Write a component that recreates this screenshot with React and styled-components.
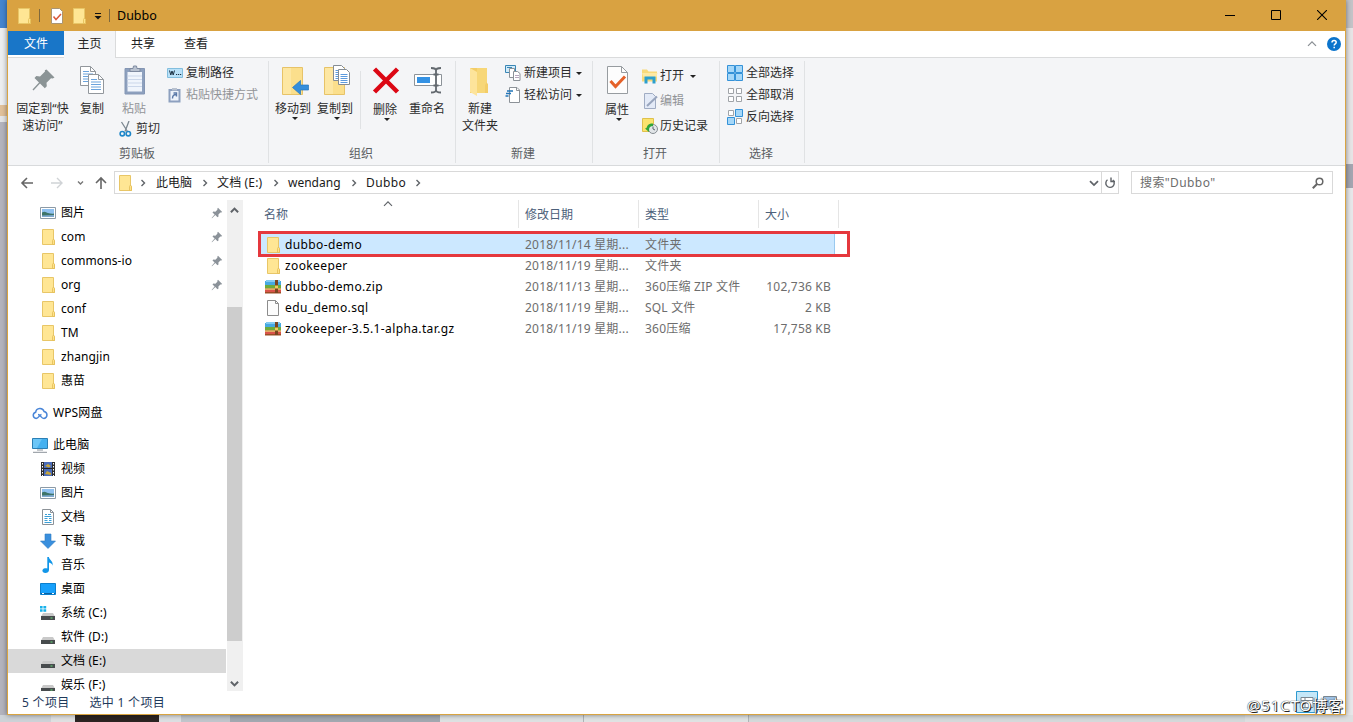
import React from 'react';
import styled, { createGlobalStyle, css } from 'styled-components';

const Global = createGlobalStyle`
  * { box-sizing: border-box; }
  body { margin: 0; overflow: hidden; }
`;

const Desktop = styled.div`
  display: grid;
  grid-template-columns: 7px 1339px 7px;
  grid-template-rows: 715px 7px;
  width: 1353px;
  height: 722px;
  overflow: hidden;
  background: #dfe2e4;
  font: 12px/16px 'Noto Sans', 'Noto Sans CJK SC', sans-serif;
  color: #1a1a1a;
  white-space: nowrap;
`;
const Edge = styled.div`
  display: flex;
  flex-direction: column;
`;
const Taskbar = styled.div`
  grid-column: 1 / -1;
  display: flex;
`;
const Block = styled.i`
  display: block;
  flex: ${p => (p.$size ? `0 0 ${p.$size}px` : '1')};
  background: ${p => p.$color};
`;

const Window = styled.main`
  position: relative;
  display: flex;
  flex-direction: column;
  border: 1px solid #d9a441;
  border-top: 0;
  background: #fff;
  box-shadow: 0 0 5px rgba(0, 0, 0, 0.45);
`;

const TitleBar = styled.header`
  display: flex;
  align-items: center;
  flex: 0 0 31px;
  padding-left: 8px;
  background: #d9a241;
  color: #000;
`;
const TitleDivider = styled.i`
  width: 1px;
  height: 13px;
  background: #7f683c;
  margin: 0 ${p => p.$after}px 0 ${p => p.$before}px;
`;
const Title = styled.h1`
  margin: 0;
  font: inherit;
  font-size: 12.5px;
  flex: 1;
`;
const Caption = styled.button`
  display: grid;
  place-items: center;
  width: 46px;
  height: 31px;
  padding: 0 0 1px;
  border: 0;
  background: none;
`;

const TabBar = styled.nav`
  display: flex;
  align-items: flex-start;
  flex: 0 0 27px;
  height: 27px;
  min-height: 0;
  border-bottom: 1px solid #dadbdc;
`;
const Tab = styled.a`
  display: flex;
  justify-content: center;
  align-items: center;
  width: ${p => p.$w}px;
  height: ${p => (p.$active ? 27 : 24)}px;
  padding-top: ${p => (p.$active ? 0 : 2)}px;
  padding-bottom: ${p => (p.$active ? 1 : 0)}px;
  color: ${p => (p.$file ? '#fff' : '#222')};
  background: ${p => (p.$file ? '#1976c8' : p.$active ? '#f4f5f7' : 'transparent')};
  ${p => p.$active && css`border-right: 1px solid #dadbdc;`}
`;
const TabTools = styled.div`
  display: flex;
  align-items: center;
  height: 26px;
  gap: 10px;
  margin-left: auto;
  padding-right: 4px;
`;

const Ribbon = styled.section`
  display: flex;
  flex: 0 0 108px;
  padding: 3px 0 2px;
  background: #f4f5f7;
  border-bottom: 1px solid #d8dadc;
`;
const Group = styled.div`
  display: grid;
  grid-template-rows: 85px 17px;
  width: ${p => p.$w}px;
  border-right: 1px solid #e0e2e4;
`;
const GroupBody = styled.div`
  display: flex;
  padding-left: ${p => p.$left || 0}px;
`;
const GroupName = styled.div`
  padding-right: 2px;
  text-align: center;
  color: #5a5d61;
`;
const Stack = styled.div`
  display: flex;
  flex-direction: column;
  padding-top: ${p => p.$top || 0}px;
  gap: ${p => p.$gap || 0}px;
  margin-left: ${p => p.$left || 0}px;
`;
const BigBtn = styled.div`
  display: flex;
  flex-direction: column;
  align-items: center;
  width: ${p => p.$w}px;
  padding-top: 4px;
  line-height: 17px;
  text-align: center;
  color: ${p => (p.$off ? '#929497' : '#2b2b2b')};
  svg { flex: none; }
`;
const BigLabel = styled.span`
  padding-top: ${p => (p.$low ? 4 : 3)}px;
`;
const SmallBtn = styled.div`
  display: flex;
  align-items: center;
  height: 22px;
  gap: ${p => p.$gap || 3}px;
  color: ${p => (p.$off ? '#929497' : '#2b2b2b')};
`;
const ThinRule = styled.i`
  width: 1px;
  height: 58px;
  margin: 10px 3px 0 4px;
  background: #e0e2e4;
`;
const Caret = styled.i`
  width: 0;
  height: 0;
  border: 3px solid transparent;
  border-top-color: #222;
  border-bottom: 0;
  margin-left: ${p => p.$left || 0}px;
`;

const NavBar = styled.div`
  display: flex;
  align-items: center;
  flex: 0 0 33px;
  padding: 0 12px 0 12px;
`;
const NavArrows = styled.div`
  display: flex;
  width: 94px;
`;
const AddressBox = styled.div`
  display: flex;
  align-items: center;
  width: 1005px;
  height: 23px;
  padding-left: 2px;
  border: 1px solid #d9d9d9;
  color: #1a1a1a;
`;
const Crumb = styled.span`
  width: ${p => p.$w}px;
  letter-spacing: ${p => p.$ls || 0}px;
`;
const CrumbSep = styled.span`
  display: flex;
  width: ${p => p.$w || 25}px;
  padding-left: ${p => p.$left || 6}px;
`;
const AddressTools = styled.div`
  display: flex;
  align-items: center;
  height: 100%;
  margin-left: auto;
`;
const Refresh = styled.div`
  display: grid;
  place-items: center;
  width: 17px;
  height: 100%;
  margin-left: 2px;
  border-left: 1px solid #d9d9d9;
`;
const SearchBox = styled.div`
  display: flex;
  align-items: center;
  justify-content: space-between;
  width: 202px;
  height: 23px;
  margin-left: 12px;
  padding: 0 8px 0 8px;
  border: 1px solid #d9d9d9;
  color: #6d6d6d;
  letter-spacing: 0.4px;
`;

const Body = styled.div`
  display: flex;
  flex: 0 0 493px;
  min-height: 0;
`;
const Tree = styled.div`
  width: 219px;
  height: 492px;
  padding-top: 2px;
  overflow: hidden;
  color: #000;
  letter-spacing: 0.1px;
`;
const TreeRow = styled.div`
  display: flex;
  align-items: center;
  width: 218px;
  height: 24px;
  margin-bottom: ${p => p.$after || 0}px;
  padding: 0 3px 0 ${p => (p.$root ? 24 : 32)}px;
  gap: 5px;
  background: ${p => (p.$on ? '#d9d9d9' : 'transparent')};
  & > svg:last-child { margin-left: auto; }
`;
const ScrollBar = styled.div`
  display: flex;
  flex-direction: column;
  width: 16px;
  height: 491px;
  padding-top: 6px;
  margin-top: 1px;
  background: #f0f0f0;
  & > svg { flex: none; margin-left: 3px; }
`;
const Thumb = styled.i`
  flex: none;
  width: 15px;
  height: 334px;
  margin: 92px 0 38px;
  background: #cdcdcd;
`;

const List = styled.section`
  position: relative;
  width: 592px;
  margin-left: 15px;
`;
const HeadRow = styled.div`
  position: relative;
  display: flex;
  height: 35px;
  padding-top: 1px;
  color: #4c607a;
`;
const Head = styled.div`
  width: ${p => p.$w}px;
  height: 28px;
  padding: 7px 0 0 6px;
  border-right: 1px solid #e5e5e5;
`;
const SortMark = styled.span`
  position: absolute;
  left: 125px;
  top: -2px;
`;
const FileRow = styled.div`
  display: flex;
  align-items: center;
  width: 574px;
  height: 21px;
  margin-left: 3px;
  background: ${p => (p.$on ? '#cce8ff' : 'transparent')};
  ${p => p.$on && css`box-shadow: inset -1px 0 #99c9ef;`}
`;
const FileName = styled.span`
  display: flex;
  align-items: center;
  gap: 4px;
  width: 264px;
  padding-left: 4px;
  color: #000;
  letter-spacing: 0.38px;
`;
const Cell = styled.span`
  width: ${p => p.$w}px;
  color: #6d6d6d;
  letter-spacing: 0.2px;
  text-align: ${p => (p.$right ? 'right' : 'left')};
`;
const Marker = styled.i`
  position: absolute;
  left: 0;
  top: 32px;
  width: 592px;
  height: 26px;
  border: 3px solid #e5383d;
`;

const StatusBar = styled.footer`
  display: flex;
  align-items: center;
  flex: 0 0 22px;
  gap: 20px;
  padding-left: 14px;
  color: #1e395b;
  letter-spacing: 0.3px;
`;
const ViewIcons = styled.div`
  position: absolute;
  right: 7px;
  bottom: 1px;
  display: flex;
  align-items: center;
  gap: 4px;
`;
const Watermark = styled.div`
  position: absolute;
  right: 1px;
  bottom: 0;
  font-size: 15px;
  letter-spacing: 0.9px;
  line-height: 18px;
  color: #fff;
  text-shadow: 1px 1px 0 #222, 0 0 1px #333, 0 0 1px #555;
`;

const Svg = ({ w = 16, h = 16, children, ...rest }) => (
  <svg width={w} height={h} viewBox={`0 0 ${w} ${h}`} fill="none" {...rest}>{children}</svg>
);

const Folder = () => (
  <Svg>
    <path d="M2.5.5h11v10l1 1v4h-12z" fill="#ffe694" stroke="#e8c667" />
    <path d="M12.5 15.5v-4l1-1.5 1 1.5v4z" fill="#ffe28a" stroke="#e2bd57" strokeWidth=".8" />
  </Svg>
);
const Photo = () => (
  <Svg>
    <path d="M.5 2.5h15v11H.5z" fill="#fff" stroke="#8c9aa6" />
    <path d="M2 4h12v5H2z" fill="#8fc0ef" />
    <path d="M2 7.5c3-2 4 0 6 .5s4 1 6 .5V12H2z" fill="#3e7468" />
    <path d="M2 10.500l12-.5v2H2z" fill="#7fa9cf" />
  </Svg>
);
const Cloud = () => (
  <Svg>
    <path d="M4.200 13.500a3.200 3.200 0 01-.5-6.300 4.300 4.300 0 018.400-.6 3.500 3.500 0 01-.1 6.900c-3 0-3.500-4-6-4" stroke="#4a86d8" strokeWidth="1.500" />
    <path d="M4 13.500c3 0 3-3.500 5.500-4" stroke="#4a86d8" strokeWidth="1.300" />
  </Svg>
);
const Monitor = () => (
  <Svg>
    <path d="M.5 1.500h15v10H.5z" fill="#45b1f0" stroke="#2b7fb5" />
    <path d="M1 2h9L5 11H1z" fill="#6cc6f7" />
    <path d="M5 13h6M1 15.300h14" stroke="#8a9299" />
  </Svg>
);
const Film = () => (
  <Svg>
    <path d="M1 1h14v14H1z" fill="#2c2c2c" />
    <path d="M4 1h8v14H4z" fill="#4a6cb8" />
    <path d="M4 7.500h8" stroke="#222" />
    <path d="M5 5l3-2 3 2-2 1.500zM5 13l2-3 4 2v2z" fill="#c8a63a" />
    <path d="M2.500 2v13M13.500 2v13" stroke="#fff" strokeDasharray="1.500 1.500" />
  </Svg>
);
const DocPage = () => (
  <Svg>
    <path d="M2.500.5h8l3 3v12h-11z" fill="#fff" stroke="#8c9298" />
    <path d="M10.500.5v3h3" stroke="#8c9298" />
    <path d="M5 5.500h2M8 5.500h3M4.500 7.500h7M4.500 9.500h3M9 9.500h2.500M4.500 11.500h3M9 11.500h2.500M4.500 13.500h7" stroke="#3b9fd6" />
  </Svg>
);
const Download = () => (
  <Svg><path d="M5 1h6v7h4.500L8 15.500.5 8H5z" fill="#3a8fdd" stroke="#2f7cc4" strokeWidth=".6" /></Svg>
);
const Music = () => (
  <Svg>
    <path d="M7.300 0h1.600c.2 3 4.800 4 3.600 8.700C12 6.500 10.500 6 9 5.500V13c0 1.800-1.600 3-3.600 3C1.500 16 1.500 11.500 5 11.200c.9 0 1.700.1 2.300.4z" fill="#1296e8" />
  </Svg>
);
const DesktopIcon = () => (
  <Svg>
    <path d="M.5 2.500h15v11H.5z" fill="#17a0fb" stroke="#0b7fcd" />
    <path d="M1 12.500h14" stroke="#0a60a0" />
    <path d="M2 12.500h2M12 12.500h2" stroke="#fff" />
  </Svg>
);
const Drive = ({ win }) => (
  <Svg>
    <path d="M3 8h10l2 3.500H1z" fill="#c9c9c9" />
    <path d="M1 11h14v4H1z" fill="#474b4d" />
    <path d="M10.500 13h2" stroke="#67df7a" />
    {win && <path d="M0 1h2.600v2.500H0zM3.400 1h2.800v2.500H3.400zM0 4.300h2.600v2.500H0zM3.400 4.300h2.800v2.500H3.400z" fill="#18b1ea" />}
  </Svg>
);
const Pin = () => (
  <Svg w={12} h={12}><path d="M7 .8l4.200 4.200-1 .5-.8-.1-2 2 .1 2-1 .8-2.200-2.200L1 11.300l-.4-.4L3.600 7.500 1.500 5.400l.8-.8 2.100.1 2-2-.1-.9z" fill="#8b9299" /></Svg>
);
const Chevron = ({ dir = 'right', color = '#5f6368', s = 8, sw = 1.4 }) => {
  const d = {
    right: 'M2.500 1l3 3-3 3', up: 'M.8 5.500L4 2.300l3.200 3.200', down: 'M.8 2.500L4 5.700l3.200-3.200',
  }[dir];
  return <svg width={s} height={s} viewBox="0 0 8 8" fill="none"><path d={d} stroke={color} strokeWidth={sw} /></svg>;
};
const Archive = () => (
  <Svg>
    <path d="M0 2h16v5H0z" fill="#46a9e2" /><path d="M1 1h14v2H1z" fill="#83cbf1" />
    <path d="M0 6h16v4H0z" fill="#6dab3c" /><path d="M0 9.500h16V14H0z" fill="#d9534a" />
    <path d="M0 9.500h16v1.200H0z" fill="#e8cf72" /><path d="M0 13h16v1.500H0z" fill="#9c4e26" />
    <path d="M10 1h3v13h-3z" fill="#7a4420" /><path d="M10 6.500h3v3h-3z" fill="#f0cc5a" />
  </Svg>
);
const BlankFile = () => (
  <Svg><path d="M2.500.5h8l3 3v12h-11z" fill="#fcfcfc" stroke="#8c8c8c" /><path d="M10.500.5v3h3" stroke="#8c8c8c" /></Svg>
);

const PinBig = () => (
  <Svg w={32} h={32}><path d="M19.500 5l8 8-1.800 1-1.700-.2-4.500 4.500.3 3.500-2 2-4.800-4.800L6.500 26l-1-1 6.500-7-4.500-4.600 1.800-1.800 3.700.3 5-5-.2-1.200z" fill="#8b9496" transform="translate(0 -.5)" /></Svg>
);
const CopyBig = () => (
  <Svg w={32} h={32}>
    {[[4.5, 1.5], [12.5, 9.5]].map(([x, y]) => (
      <g key={x} transform={`translate(${x} ${y})`}>
        <path d="M0 0h10l5 5v14H0z" fill="#fff" stroke="#92979c" />
        <path d="M10 0v5h5" stroke="#92979c" />
        <path d="M2.500 5h6M2.500 7.500h10M2.500 10h10M2.500 12.500h10M2.500 15h10" stroke="#6ba3dc" />
      </g>
    ))}
  </Svg>
);
const PasteBig = () => (
  <Svg w={32} h={32}>
    <path d="M7 3.500h19.500v25.500H7z" fill="#8da0be" stroke="#8496b4" />
    <path d="M9.500 7h14.500v19.500H9.500z" fill="#f0f5fc" />
    <path d="M9.500 11h14.500M9.500 14.500h14.500M9.500 18h14.500M9.500 21.500h14.500" stroke="#cbd7ea" />
    <path d="M12 6.500v-3h3L15.500 1h3l.5 2.500h3v3z" fill="#b8c1cf" stroke="#7e8aa0" />
  </Svg>
);
const CopyPath = () => (
  <Svg><path d="M.5 3.500h15v9H.5z" fill="#b9e1f8" stroke="#82bede" /><path d="M2.500 5.500l1.300 4.500 1.200-4 1.200 4 1.300-4.500" stroke="#1d3345" /><path d="M9 9.500h1.200M11 9.500h1.200M13 9.500h1.200" stroke="#1d3345" /></Svg>
);
const PasteLink = () => (
  <Svg>
    <path d="M1.500 2h12v13.500h-12z" fill="#8da0bf" /><path d="M3.500 4h8v9.500h-8z" fill="#eef3fb" />
    <path d="M5 1h5v2.500H5z" fill="#b8c1cf" /><path d="M5.500 11.500c0-2.500 1-4 3.500-4M6.500 6h3v3.500" stroke="#5b79a8" strokeWidth="1.400" />
  </Svg>
);
const Scissors = () => (
  <Svg w={14}>
    <path d="M2.500 1l6 9.500M10 0l-4 10.500" stroke="#7b8790" strokeWidth="1.300" />
    <circle cx="3.300" cy="12.700" r="2.200" stroke="#1e86c8" strokeWidth="1.600" /><circle cx="9.300" cy="12.700" r="2.200" stroke="#1e86c8" strokeWidth="1.600" />
  </Svg>
);
const BigFolder = () => (
  <>
    <path d="M5.500 2.500h20v27h-20z" fill="#fbdf8c" stroke="#e7c368" />
    <path d="M6 3h8v26H6z" fill="#fde7a3" />
  </>
);
const MoveTo = () => (
  <Svg w={34} h={32}>
    <g transform="translate(1)">
      <BigFolder />
      <path d="M15.500 22.500l8-7v4.500h8v5h-8V29.500z" fill="#348edc" stroke="#2477bf" strokeWidth=".7" />
    </g>
  </Svg>
);
const CopyTo = () => (
  <Svg w={34} h={32}>
    <g transform="translate(1)"><BigFolder /></g>
    {[[15.5, 0.5], [20.5, 4.5]].map(([x, y]) => (
      <g key={x} transform={`translate(${x} ${y})`}>
        <path d="M0 0h8l3 3v12H0z" fill="#fff" stroke="#858c93" />
        <path d="M2 5h7M2 7h7M2 9h7M2 11h7M2 13h7" stroke="#5c9add" />
      </g>
    ))}
  </Svg>
);
const Delete = () => (
  <Svg w={32} h={32}><path d="M5.500 4l23 23M28.500 4l-23 23" stroke="#dc0714" strokeWidth="4.500" /></Svg>
);
const Rename = () => (
  <Svg w={32} h={32}>
    <path d="M3.500 9.500h27v11h-27z" fill="#fff" stroke="#8c9298" />
    <path d="M6 12h13v6H6z" fill="#3492e4" />
    <path d="M20 3c3 0 5 .5 5 2.500v19.500c0 2-2 2.500-5 2.500M30 3c-3 0-5 .5-5 2.500M30 27.500c-3 0-5-.5-5-2.500M22.500 9.500h5M22.500 20.500h5" stroke="#62686e" strokeWidth="1.800" />
  </Svg>
);
const NewFolder = () => (
  <Svg w={32} h={32}>
    <path d="M6 3h17v15l1 1v9H6z" fill="#f3cd68" />
    <path d="M6 3l7 4v24l-7-4z" fill="#fde49b" /><path d="M13 3h10v14l-2 3v8h-8z" fill="#f7d778" />
  </Svg>
);
const NewItem = () => (
  <Svg>
    <path d="M.5.5h10v7H.5z" fill="#d0ecfb" stroke="#3a86b5" /><path d="M2 2.500h5" stroke="#3a86b5" />
    <path d="M4.500 3.500h5v9h-5z" fill="#fff" stroke="#8c9298" /><path d="M8.500 6.500h4l2.500 2v7H8.500z" fill="#fff" stroke="#8c9298" />
    <path d="M10 10.500h4M10 12.500h4" stroke="#b7a6bd" />
  </Svg>
);
const EasyAccess = () => (
  <Svg><path d="M4.500.5h7.500l2.500 2.500v12.500h-10z" fill="#fff" stroke="#8c9298" /><path d="M11.500.5v3h3" stroke="#8c9298" /><path d="M2 4h6M1 6.500h5M.5 9h3" stroke="#2275b8" strokeWidth="1.300" /></Svg>
);
const Props = () => (
  <Svg w={32} h={32}>
    <path d="M6.500 1.500h14l6 6v21h-20z" fill="#fdfdfd" stroke="#979ca0" /><path d="M20.500 1.500v6h6" stroke="#979ca0" />
    <path d="M9.500 16l5 5.500L24 11.500" stroke="#e5622a" strokeWidth="3" />
  </Svg>
);
const OpenIcon = () => (
  <Svg><path d="M0 1.500h5l1.500 2H15v10H0z" fill="#f8da7b" /><path d="M0 5h15.500l-1 4h-13z" fill="#fde9a4" /><path d="M2.500 15.500V8.500h11v7h-3v-4h-5v4z" fill="#2b9fcd" /></Svg>
);
const Edit = () => (
  <Svg><path d="M2.500.5h8l3 3v12h-11z" fill="#e3eaf7" stroke="#a0acc3" /><path d="M15 3.500L5 13" stroke="#98a5bd" strokeWidth="2" /></Svg>
);
const History = () => (
  <Svg><path d="M.5.5h11v13H.5z" fill="#fbe36e" stroke="#dfc14c" /><circle cx="11" cy="11" r="4.500" fill="#e1e5e8" stroke="#868d92" /><path d="M11 8.500V11l2 1" stroke="#59626a" /><path d="M3 10.500L7 14v-2c0-3 1.500-4 4-4V5.500C7 5 5 7.500 4.500 10z" fill="#2fa53a" /></Svg>
);
const SelectAll = () => (
  <Svg><path d="M.5.5h7v7h-7zM8.500.5h7v7h-7zM.5 8.500h7v7h-7zM8.500 8.500h7v7h-7z" fill="#a5d7f8" stroke="#3492d8" /></Svg>
);
const SelectNone = () => (
  <Svg><path d="M1.500 1.500h5v5h-5zM9.500 1.500h5v5h-5zM1.500 9.500h5v5h-5zM9.500 9.500h5v5h-5z" fill="#fff" stroke="#a0a4a8" /></Svg>
);
const Invert = () => (
  <Svg><path d="M1.500 1.500h5v5h-5zM9.500 9.500h5v5h-5z" fill="#fff" stroke="#a0a4a8" /><path d="M8.500.5h7v7h-7zM.5 8.500h7v7h-7z" fill="#a5d7f8" stroke="#3492d8" /></Svg>
);

const tree = [
  ['图片', Photo, { pin: true }], ['com', Folder, { pin: true }], ['commons-io', Folder, { pin: true }],
  ['org', Folder, { pin: true }], ['conf', Folder, {}], ['TM', Folder, {}], ['zhangjin', Folder, {}],
  ['惠苗', Folder, { after: 8 }], ['WPS网盘', Cloud, { root: true, after: 8 }],
  ['此电脑', Monitor, { root: true }], ['视频', Film, {}], ['图片', Photo, {}], ['文档', DocPage, {}],
  ['下载', Download, {}], ['音乐', Music, {}], ['桌面', DesktopIcon, {}],
  ['系统 (C:)', Drive, { win: true }], ['软件 (D:)', Drive, {}], ['文档 (E:)', Drive, { on: true }], ['娱乐 (F:)', Drive, {}],
];
const files = [
  ['dubbo-demo', Folder, '2018/11/14 星期...', '文件夹', ''],
  ['zookeeper', Folder, '2018/11/19 星期...', '文件夹', ''],
  ['dubbo-demo.zip', Archive, '2018/11/13 星期...', '360压缩 ZIP 文件', '102,736 KB'],
  ['edu_demo.sql', BlankFile, '2018/11/19 星期...', 'SQL 文件', '2 KB'],
  ['zookeeper-3.5.1-alpha.tar.gz', Archive, '2018/11/19 星期...', '360压缩', '17,758 KB'],
];

const Big = ({ icon: Icon, w, label, second, caret, off, low }) => (
  <BigBtn $w={w} $off={off}>
    <Icon />
    <BigLabel $low={low}>{label}{second && <><br />{second}</>}</BigLabel>
    {caret && <Caret $left={4} />}
  </BigBtn>
);
const Small = ({ icon: Icon, label, caret, off, gap }) => (
  <SmallBtn $off={off} $gap={gap}><Icon />{label}{caret && <Caret $left={gap ? 4 : 1} />}</SmallBtn>
);

export default function App() {
  return (
    <>
      <Global />
      <Desktop>
        <Edge>
          <Block $size={28} $color="#4485cf" /><Block $size={77} $color="#eceef0" />
          <Block $size={11} $color="#e0c09a" /><Block $size={6} $color="#e4e5e7" /><Block $color="#b3b3bd" />
        </Edge>
        <Window>
          <TitleBar>
            <Folder />
            <TitleDivider $before={7} $after={9} />
            <Svg>
              <path d="M2.500.5h8l3 3v12h-11z" fill="#fff" stroke="#a99574" />
              <path d="M4.500 8.500l2.500 3 5-5.500" stroke="#d95a3c" strokeWidth="1.500" />
            </Svg>
            <Svg w={6} h={16} />
            <Folder />
            <Svg w={8} h={8} style={{ marginLeft: 7 }}><path d="M1 1.500h6" stroke="#111" /><path d="M.5 4h7L4 7.500z" fill="#111" /></Svg>
            <TitleDivider $before={7} $after={7} />
            <Title>Dubbo</Title>
            <Caption><Svg w={10} h={10}><path d="M0 5.500h10" stroke="#000" /></Svg></Caption>
            <Caption><Svg w={10} h={10}><path d="M.5.5h9v9h-9z" stroke="#000" /></Svg></Caption>
            <Caption><Svg w={10} h={10}><path d="M0 0l10 10M10 0L0 10" stroke="#000" strokeWidth="1.100" /></Svg></Caption>
          </TitleBar>
          <TabBar>
            <Tab $file $w={56}>文件</Tab>
            <Tab $active $w={52}>主页</Tab>
            <Tab $w={54}>共享</Tab>
            <Tab $w={52}>查看</Tab>
            <TabTools>
              <Chevron dir="up" s={10} color="#8a8f94" sw={1} />
              <Svg w={14} h={14}>
                <circle cx="7" cy="7" r="7" fill="#0b74cc" />
                <path d="M5 5.500c0-2.700 4.200-2.500 4.200-.2C9.200 7 7.200 6.800 7.200 8.600M7.200 9.800v1.500" stroke="#fff" strokeWidth="1.500" />
              </Svg>
            </TabTools>
          </TabBar>
          <Ribbon>
            <Group $w={261}>
              <GroupBody $left={6}>
                <Big icon={PinBig} w={57} label="固定到“快" second="速访问”" />
                <Big icon={CopyBig} w={42} label="复制" />
                <Stack>
                  <Big icon={PasteBig} w={42} label="粘贴" off />
                  <Stack $top={1} $left={6}><Small icon={Scissors} label="剪切" /></Stack>
                </Stack>
                <Stack $top={1} $left={7}>
                  <Small icon={CopyPath} label="复制路径" />
                  <Small icon={PasteLink} label="粘贴快捷方式" off />
                </Stack>
              </GroupBody>
              <GroupName>剪贴板</GroupName>
            </Group>
            <Group $w={187}>
              <GroupBody $left={3}>
                <Big icon={MoveTo} w={42} label="移动到" caret />
                <Big icon={CopyTo} w={42} label="复制到" caret />
                <ThinRule />
                <Big icon={Delete} w={42} label="删除" caret low />
                <Big icon={Rename} w={42} label="重命名" />
              </GroupBody>
              <GroupName>组织</GroupName>
            </Group>
            <Group $w={137}>
              <GroupBody $left={3}>
                <Big icon={NewFolder} w={42} label="新建" second="文件夹" />
                <Stack $top={1} $left={4}>
                  <Small icon={NewItem} label="新建项目" caret />
                  <Small icon={EasyAccess} label="轻松访问" caret />
                </Stack>
              </GroupBody>
              <GroupName>新建</GroupName>
            </Group>
            <Group $w={127}>
              <GroupBody $left={3}>
                <Big icon={Props} w={42} label="属性" caret low />
                <Stack $top={4} $left={4} $gap={3}>
                  <Small icon={OpenIcon} label="打开" caret gap={2} />
                  <Small icon={Edit} label="编辑" off gap={2} />
                  <Small icon={History} label="历史记录" gap={2} />
                </Stack>
              </GroupBody>
              <GroupName>打开</GroupName>
            </Group>
            <Group $w={85}>
              <GroupBody $left={7}>
                <Stack $top={1}>
                  <Small icon={SelectAll} label="全部选择" />
                  <Small icon={SelectNone} label="全部取消" />
                  <Small icon={Invert} label="反向选择" />
                </Stack>
              </GroupBody>
              <GroupName>选择</GroupName>
            </Group>
          </Ribbon>
          <NavBar>
            <NavArrows>
              <Svg w={94} h={16}>
                <path d="M13 8H2M7 3L2 8l5 5" stroke="#666" strokeWidth="1.600" />
                <path d="M31 8h11M37 3l5 5-5 5" stroke="#d0d3d6" strokeWidth="1.400" />
                <path d="M58 6.500l2.500 2.500L63 6.500" stroke="#777" strokeWidth="1.400" />
                <path d="M81 14V3M76 8l5-5 5 5" stroke="#666" strokeWidth="1.600" />
              </Svg>
            </NavArrows>
            <AddressBox>
              <Folder />
              <CrumbSep $w={23}><Chevron /></CrumbSep>
              <Crumb $w={39}>此电脑</Crumb><CrumbSep $w={22}><Chevron /></CrumbSep>
              <Crumb $w={49} $ls={0.15}>文档 (E:)</Crumb><CrumbSep $w={22}><Chevron /></CrumbSep>
              <Crumb $w={56}>wendang</Crumb><CrumbSep $w={22}><Chevron /></CrumbSep>
              <Crumb $w={42} $ls={0.4}>Dubbo</Crumb><CrumbSep><Chevron /></CrumbSep>
              <AddressTools>
                <Chevron dir="down" s={10} />
                <Refresh>
                  <Svg w={12} h={12}><path d="M3.500 2.800A4.200 4.200 0 108.800 3" stroke="#5f6368" strokeWidth="1.400" /><path d="M7 .5v4h4" stroke="#5f6368" strokeWidth="1.400" /></Svg>
                </Refresh>
              </AddressTools>
            </AddressBox>
            <SearchBox>
              搜索"Dubbo"
              <Svg w={12} h={12}><circle cx="7.500" cy="4.500" r="3.300" stroke="#666" strokeWidth="1.500" /><path d="M5 7L.8 11.200" stroke="#666" strokeWidth="2" /></Svg>
            </SearchBox>
          </NavBar>
          <Body>
            <Tree>
              {tree.map(([name, Icon, o], i) => (
                <TreeRow key={i} $root={o.root} $after={o.after} $on={o.on}>
                  <Icon win={o.win} /><span>{name}</span>{o.pin && <Pin />}
                </TreeRow>
              ))}
            </Tree>
            <ScrollBar>
              <Chevron dir="up" sw={1.8} s={9} />
              <Thumb />
              <Chevron dir="down" sw={1.8} s={9} />
            </ScrollBar>
            <List>
              <HeadRow>
                <Head $w={261}>名称</Head><Head $w={120}>修改日期</Head>
                <Head $w={120}>类型</Head><Head $w={80}>大小</Head>
                <SortMark><Chevron dir="up" s={10} sw={0.9} /></SortMark>
              </HeadRow>
              {files.map(([name, Icon, date, type, size], i) => (
                <FileRow key={name} $on={i === 0}>
                  <FileName><Icon />{name}</FileName>
                  <Cell $w={120}>{date}</Cell>
                  <Cell $w={114}>{type}</Cell>
                  <Cell $w={72} $right>{size}</Cell>
                </FileRow>
              ))}
              <Marker />
            </List>
          </Body>
          <StatusBar><span>5 个项目</span><span>选中 1 个项目</span></StatusBar>
          <ViewIcons>
            <Svg w={22} h={22}><path d="M.5.5h21v21H.5z" fill="#c4e7f8" stroke="#2f9ad0" /><path d="M5 6.500h12v10H5z" fill="#fff" stroke="#7b8790" /><path d="M5 9.500h12M9 6.500v10" stroke="#7b8790" /></Svg>
            <Svg w={16} h={16}><path d="M1.500 2.500h13v10h-13z" fill="#9ec1e4" stroke="#7b8790" /></Svg>
          </ViewIcons>
          <Watermark>@51CTO博客</Watermark>
        </Window>
        <Edge>
          <Block $size={28} $color="#c3c3c7" /><Block $size={136} $color="#e6e4e5" />
          <Block $size={24} $color="#a3a5b0" /><Block $color="#e6e7e9" />
        </Edge>
        <Taskbar>
          <Block $size={51} $color="#cdd2d7" /><Block $size={24} $color="#dfe0e1" />
          <Block $size={84} $color="#2c2422" /><Block $size={22} $color="#dcdfe2" />
          <Block $size={49} $color="#c0c5cb" /><Block $size={210} $color="#a2a8b0" />
          <Block $size={143} $color="#dde1e2" /><Block $size={1} $color="#aeb3b6" /><Block $size={164} $color="#dfe3e3" />
          <Block $size={1} $color="#b0b5b8" /><Block $size={496} $color="#d4d9da" /><Block $color="#dddfe0" />
        </Taskbar>
      </Desktop>
    </>
  );
}
